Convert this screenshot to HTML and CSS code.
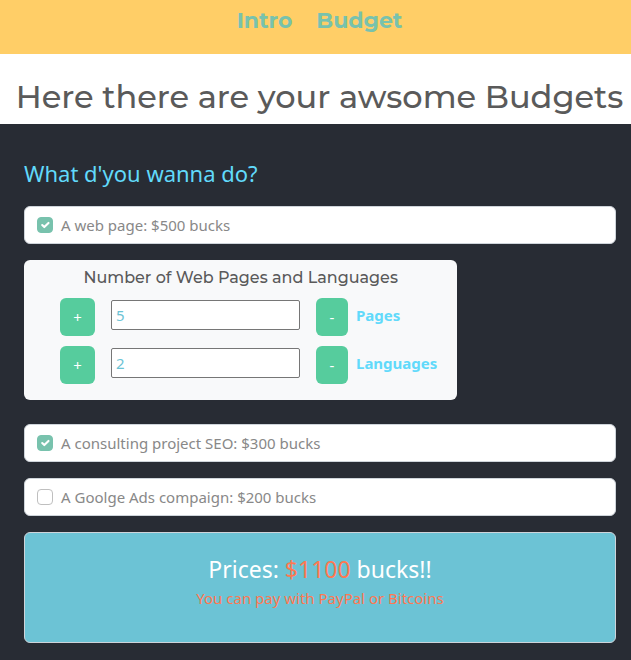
FILE: index.html
```html
<!DOCTYPE html>
<html lang="en">
<head>
<meta charset="utf-8">
<meta name="viewport" content="width=device-width, initial-scale=1">
<title>Budgets</title>
<link rel="stylesheet" href="styles.css">
</head>
<body>
<nav class="navbar">
  <a class="nav-link" href="#intro">Intro</a>
  <a class="nav-link" href="#budget">Budget</a>
</nav>
<h1 class="page-title">Here there are your awsome Budgets</h1>
<main class="budget">
  <h2 class="question">What d'you wanna do?</h2>
  <label class="option"><input class="check" type="checkbox" checked><span>A web page: $500 bucks</span></label>
  <section class="panel">
    <h3 class="panel-title">Number of Web Pages and Languages</h3>
    <div class="counter">
      <button class="btn" type="button" aria-label="Add a page">+</button>
      <input class="count" id="pages" type="text" value="5">
      <button class="btn btn-minus" type="button" aria-label="Remove a page">-</button>
      <label class="count-label" for="pages">Pages</label>
    </div>
    <div class="counter">
      <button class="btn" type="button" aria-label="Add a language">+</button>
      <input class="count" id="languages" type="text" value="2">
      <button class="btn btn-minus" type="button" aria-label="Remove a language">-</button>
      <label class="count-label" for="languages">Languages</label>
    </div>
  </section>
  <label class="option"><input class="check" type="checkbox" checked><span>A consulting project SEO: $300 bucks</span></label>
  <label class="option"><input class="check" type="checkbox"><span>A Goolge Ads compaign: $200 bucks</span></label>
  <section class="total">
    <p class="price">Prices: <span class="amount">$1100</span> bucks!!</p>
    <p class="payment">You can pay with PayPal or Bitcoins</p>
  </section>
</main>
</body>
</html>
```
FILE: styles.css
```css
* {
  box-sizing: border-box;
}

body {
  margin: 0;
  min-height: 100vh;
  display: flex;
  flex-direction: column;
  background: #fff;
  color: #888;
  font: 15px/24px "Segoe UI", "Noto Sans", sans-serif;
}

h1, h2, h3, p {
  margin: 0;
  font-weight: 400;
}

.navbar {
  display: flex;
  justify-content: center;
  gap: 24px;
  padding: 5px 0 17px 8px;
  background: #ffce67;
}

.nav-link {
  color: #78c2ad;
  font: 700 22px/32px Montserrat, Inter, sans-serif;
  text-decoration: none;
}

.page-title {
  padding: 24px 0 8px 8px;
  color: #5a5a5a;
  font: 500 32px/38px Montserrat, Inter, sans-serif;
  text-align: center;
}

.budget {
  flex: 1;
  display: flex;
  flex-direction: column;
  gap: 16px;
  padding: 33px 15px 16px 24px;
  background: #282c34;
}

.question {
  color: #61dafb;
  font-size: 22px;
  line-height: 33px;
}

.option {
  display: flex;
  align-items: center;
  gap: 8px;
  padding: 6px 12px;
  border: 1px solid #ced4da;
  border-radius: 6px;
  background: #fff;
}

.check {
  appearance: none;
  width: 16px;
  height: 16px;
  margin: 0;
  border: 1px solid #bfbfbf;
  border-radius: 4px;
  background: #fff;
}

.check:checked {
  border-color: #78c2ad;
  background: #78c2ad url("data:image/svg+xml,%3csvg xmlns='http://www.w3.org/2000/svg' viewBox='0 0 20 20'%3e%3cpath fill='none' stroke='%23fff' stroke-linecap='round' stroke-linejoin='round' stroke-width='3' d='M6 10l3 3l6-6'/%3e%3c/svg%3e") center / contain no-repeat;
}

.panel {
  align-self: flex-start;
  display: flex;
  flex-direction: column;
  gap: 10px;
  margin-bottom: 8px;
  padding: 8px 20px 16px 36px;
  border-radius: 6px;
  background: #f8f9fa;
}

.panel-title {
  margin-right: 16px;
  color: #5a5a5a;
  font: 500 16px/20px Montserrat, Inter, sans-serif;
  text-align: center;
}

.counter {
  display: flex;
  align-items: center;
}

.btn {
  width: 35px;
  height: 38px;
  padding: 0;
  border: 0;
  border-radius: 6px;
  background: #56cc9d;
  color: #fff;
  font: inherit;
}

.btn-minus {
  width: 32px;
}

.count {
  width: 189px;
  height: 30px;
  margin: 0 16px 4px;
  padding: 0 4px;
  border: 1px solid #767676;
  border-radius: 2px;
  background: #fff;
  color: #6cc3d5;
  font: inherit;
}

.count-label {
  margin: 0 0 4px 8px;
  color: #61dafb;
  font-weight: 700;
}

.total {
  padding: 20px 12px 32px;
  border: 1px solid #ced4da;
  border-radius: 6px;
  background: #6cc3d5;
  text-align: center;
}

.price {
  color: #fff;
  font-size: 23px;
  line-height: 33px;
}

.amount,
.payment {
  color: #ff7851;
}
```
